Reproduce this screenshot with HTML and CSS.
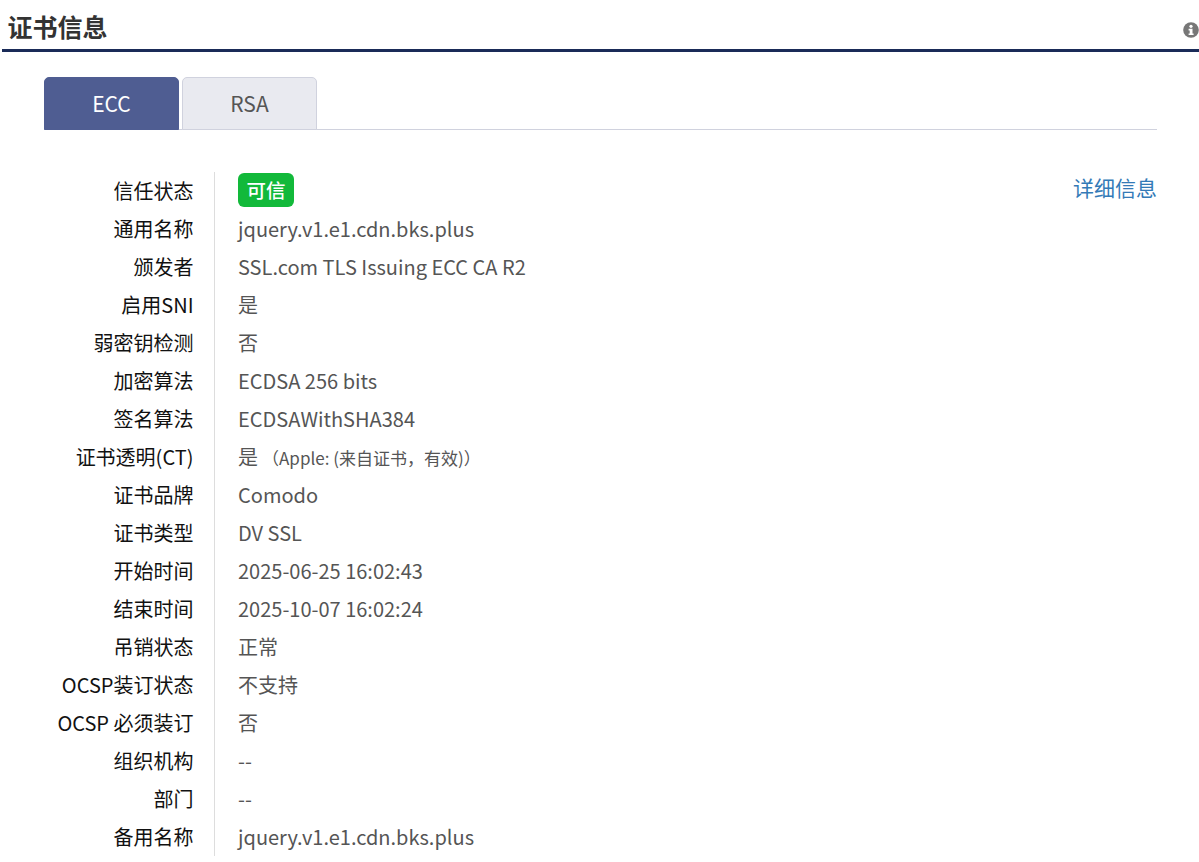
FILE: index.html
```html
<!DOCTYPE html>
<html lang="zh-CN">
<head>
<meta charset="utf-8">
<title>证书信息</title>
<link rel="stylesheet" href="styles.css">
</head>
<body>
<section class="panel">
  <header class="panel-head">
    <h2 class="panel-title">证书信息</h2>
    <svg class="info-icon" viewBox="0 0 16 16" width="16" height="16" aria-hidden="true">
      <circle cx="8" cy="8" r="7.8" fill="#777"/>
      <circle cx="8" cy="4.3" r="1.6" fill="#fff"/>
      <path d="M5.6 6.8H9.5V11.4H10.6V13H5.6V11.4H6.7V8.4H5.6Z" fill="#fff"/>
    </svg>
  </header>
  <div class="panel-body">
    <nav class="tabs">
      <a class="tab tab-active">ECC</a>
      <a class="tab">RSA</a>
    </nav>
    <div class="details">
      <a class="more-link">详细信息</a>
      <dl class="rows">
        <div class="row"><dt>信任状态</dt><dd><span class="badge">可信</span></dd></div>
        <div class="row"><dt>通用名称</dt><dd>jquery.v1.e1.cdn.bks.plus</dd></div>
        <div class="row"><dt>颁发者</dt><dd>SSL.com TLS Issuing ECC CA R2</dd></div>
        <div class="row"><dt>启用SNI</dt><dd>是</dd></div>
        <div class="row"><dt>弱密钥检测</dt><dd>否</dd></div>
        <div class="row"><dt>加密算法</dt><dd>ECDSA 256 bits</dd></div>
        <div class="row"><dt>签名算法</dt><dd>ECDSAWithSHA384</dd></div>
        <div class="row row-ct"><dt>证书透明(CT)</dt><dd>是<span class="ct-note">（Apple: (来自证书，有效)）</span></dd></div>
        <div class="row"><dt>证书品牌</dt><dd>Comodo</dd></div>
        <div class="row"><dt>证书类型</dt><dd>DV SSL</dd></div>
        <div class="row"><dt>开始时间</dt><dd>2025-06-25 16:02:43</dd></div>
        <div class="row"><dt>结束时间</dt><dd>2025-10-07 16:02:24</dd></div>
        <div class="row"><dt>吊销状态</dt><dd>正常</dd></div>
        <div class="row"><dt>OCSP装订状态</dt><dd>不支持</dd></div>
        <div class="row"><dt>OCSP 必须装订</dt><dd>否</dd></div>
        <div class="row"><dt>组织机构</dt><dd>--</dd></div>
        <div class="row"><dt>部门</dt><dd>--</dd></div>
        <div class="row"><dt>备用名称</dt><dd>jquery.v1.e1.cdn.bks.plus</dd></div>
      </dl>
    </div>
  </div>
</section>
</body>
</html>
```
FILE: styles.css
```css
* { box-sizing: border-box; }
html, body { margin: 0; padding: 0; background: #fff; }
body {
  font-family: "Noto Sans CJK SC", "Noto Sans", sans-serif;
  font-size: 20px;
  color: #555;
  overflow: hidden;
  height: 862px;
}
.panel { margin-left: 2px; }
.panel-head {
  height: 52px;
  border-bottom: 3px solid #1a2b58;
  display: flex;
  align-items: center;
  justify-content: space-between;
  padding: 0 0 0 5.5px;
}
.panel-title {
  margin: 0;
  font-size: 25px;
  line-height: 52px;
  font-weight: 700;
  color: #333;
  position: relative;
  top: 1px;
}
.info-icon { display: block; margin-top: 11px; width: 16px; height: 16px; }
.panel-body { padding: 25px 42px 0 42px; }
.tabs {
  display: flex;
  gap: 3px;
  height: 53px;
  border-bottom: 1px solid #d0d2de;
}
.tab {
  width: 135px;
  height: 53px;
  border-radius: 5px 5px 0 0;
  text-align: center;
  font-size: 21px;
  line-height: 51px;
  background: #e9eaf0;
  border: 1px solid #d0d2de;
  color: #555;
}
.tab-active {
  background: #4f5d92;
  border-color: #4f5d92;
  color: #fff;
}
.details { position: relative; margin-top: 42px; }
.more-link {
  position: absolute;
  right: 0;
  top: 0;
  font-size: 21px;
  line-height: 31px;
  color: #337ab7;
}
.rows { margin: 0; }
.row { display: flex; height: 37.95px; }
.row-ct { height: 38.7px; }
dt {
  width: 170px;
  flex: none;
  padding-right: 20.5px;
  text-align: right;
  line-height: 38px;
  color: #111;
  white-space: nowrap;
}
dd {
  margin: 0;
  border-left: 1px solid #ddd;
  padding-left: 23px;
  line-height: 38px;
  flex: 1;
}
.badge {
  display: inline-block;
  background: #12b93a;
  color: #fff;
  font-size: 19.5px;
  font-weight: 500;
  border-radius: 6px;
  height: 34px;
  line-height: 34px;
  padding: 0 8.5px;
  vertical-align: top;
  margin-top: 1px;
}
.ct-note { font-size: 17px; margin-left: 4px; }
```
